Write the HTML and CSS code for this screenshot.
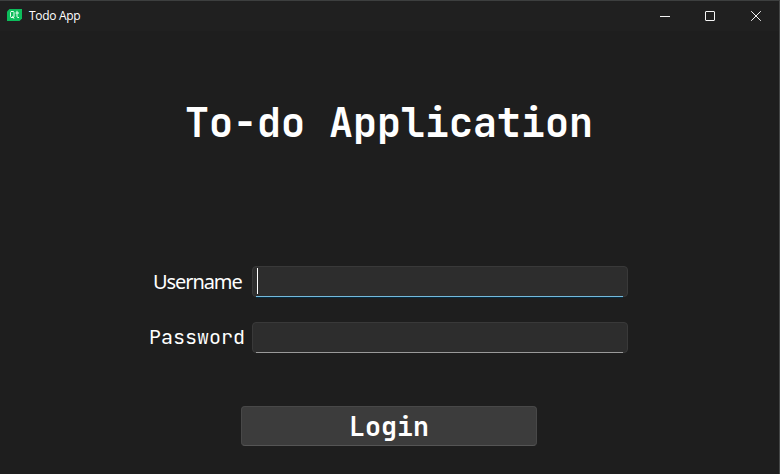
FILE: index.html
```html
<!DOCTYPE html>
<html lang="en">
<head>
<meta charset="utf-8">
<title>Todo App</title>
<link rel="stylesheet" href="styles.css">
</head>
<body>
<div class="window">
  <header class="titlebar">
    <svg class="logo" width="15" height="12" viewBox="0 0 15 12"><path fill="#0cbd5b" d="M2.5 0H15v9.5L12.5 12H0V2.5z"/><path fill="none" stroke="#e8fff0" stroke-width="1" d="M4 2.5h2.5l.5 1v4l-.5 1H4l-.5-1v-4zM5.5 7l1.5 2.7M10 1.8v6l.8.7H12M8.5 4h3.5"/></svg>
    <span class="caption">Todo App</span>
    <div class="controls">
      <svg width="46" height="30" viewBox="0 0 46 30"><path d="M18 15.5h10"/></svg>
      <svg width="46" height="30" viewBox="0 0 46 30"><rect x="17.5" y="10.5" width="9" height="9" rx="0.5"/></svg>
      <svg width="46" height="30" viewBox="0 0 46 30"><path d="M17.2 10.2l9.6 9.6M26.8 10.2l-9.6 9.6"/></svg>
    </div>
  </header>
  <main class="content">
    <h1 class="title">To-do Application</h1>
    <form class="form">
      <div class="row">
        <label class="label label-user">Username</label>
        <div class="field focused"><span class="caret"></span></div>
      </div>
      <div class="row">
        <label class="label label-pass">Password</label>
        <div class="field"></div>
      </div>
      <button class="login" type="button">Login</button>
    </form>
  </main>
</div>
</body>
</html>
```
FILE: styles.css
```css
* { box-sizing: border-box; }
body { margin: 0; background: #1e1e1e; }
.window {
  width: 780px;
  height: 474px;
  overflow: hidden;
  border-top: 1px solid #3d3f3f;
  border-right: 1px solid #454747;
  background: #1e1e1e;
  color: #fff;
}
.titlebar {
  display: flex;
  align-items: center;
  height: 30px;
  padding-left: 7px;
  background: #202020;
}
.logo { margin-top: -2px; }
.caption {
  margin-left: 7px;
  font: 12px/30px "Open Sans", sans-serif;
  letter-spacing: -0.3px;
}
.controls { display: flex; margin-left: auto; margin-right: -1px; }
.controls svg { fill: none; stroke: #f4f4f4; stroke-width: 1; margin-top: -1px; }
.title {
  margin: 62px 0 0;
  padding-right: 1px;
  font: bold 40px/60px "JetBrains Mono", "DejaVu Sans Mono", monospace;
  text-align: center;
}
.form { padding-top: 113px; }
.row { display: flex; height: 32px; margin-bottom: 24px; }
.label { width: 252px; line-height: 32px; white-space: nowrap; }
.label-user {
  padding-left: 153px;
  font-family: "Noto Sans", sans-serif;
  font-size: 20px;
  letter-spacing: -1.08px;
}
.label-pass {
  padding-left: 149px;
  font-family: "JetBrains Mono", "DejaVu Sans Mono", monospace;
  font-size: 20px;
  line-height: 30px;
}
.field {
  position: relative;
  width: 376px;
  height: 31px;
  border: 1px solid #393939;
  border-radius: 4px;
  background: #2d2d2d;
}
.field::after {
  content: "";
  position: absolute;
  left: 3px;
  right: 4px;
  bottom: -1px;
  height: 1px;
  background: #9a9a9a;
}
.focused::after { background: #76b9da; box-shadow: 0 1px #062d43; }
.caret { display: block; width: 1px; height: 26px; margin: 1px 0 0 4px; background: #fff; }
.login {
  display: block;
  width: 296px;
  height: 40px;
  margin: 52px 0 0 241px;
  padding: 2px 0 0;
  border: 1px solid #484848;
  border-bottom-color: #555;
  border-radius: 4px;
  background: #3c3c3c;
  color: #fff;
  font: bold 26.67px/36px "JetBrains Mono", "DejaVu Sans Mono", monospace;
}
```
